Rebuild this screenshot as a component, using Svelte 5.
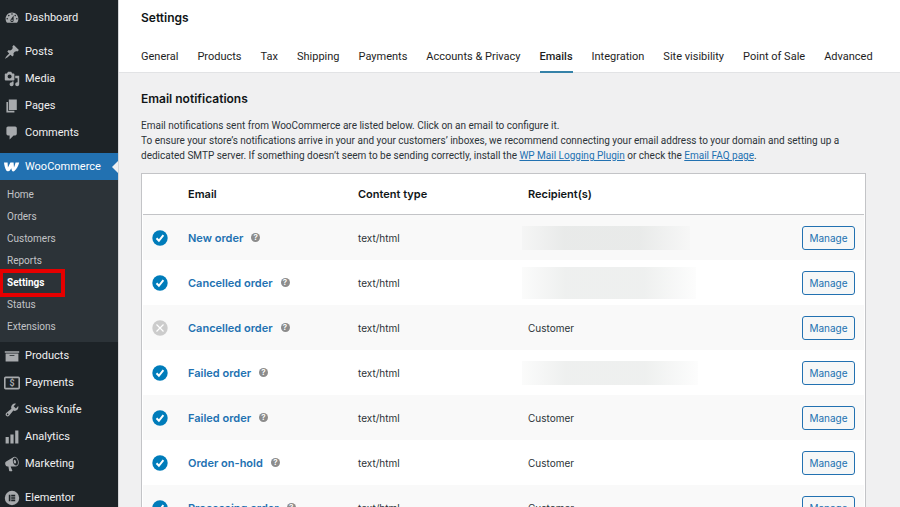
<script>
const menuTop = [
	{ label: 'Posts', icon: 'post' },
	{ label: 'Media', icon: 'media' },
	{ label: 'Pages', icon: 'page' },
	{ label: 'Comments', icon: 'comments' }
];

const submenu = ['Home', 'Orders', 'Customers', 'Reports', 'Settings', 'Status', 'Extensions'];

const menuBottom = [
	{ label: 'Products', icon: 'archive' },
	{ label: 'Payments', icon: 'payments' },
	{ label: 'Swiss Knife', icon: 'tools' },
	{ label: 'Analytics', icon: 'chart' },
	{ label: 'Marketing', icon: 'megaphone' }
];

const tabs = [
	'General', 'Products', 'Tax', 'Shipping', 'Payments', 'Accounts & Privacy',
	'Emails', 'Integration', 'Site visibility', 'Point of Sale', 'Advanced'
];

// hidden: size of the masked recipient address
const emails = [
	{ title: 'New order', enabled: true, hidden: { width: 168, height: 24 } },
	{ title: 'Cancelled order', enabled: true, hidden: { width: 174, height: 32 } },
	{ title: 'Cancelled order', enabled: false, recipient: 'Customer' },
	{ title: 'Failed order', enabled: true, hidden: { width: 176, height: 24 } },
	{ title: 'Failed order', enabled: true, recipient: 'Customer' },
	{ title: 'Order on-hold', enabled: true, recipient: 'Customer' },
	{ title: 'Processing order', enabled: true, recipient: 'Customer' }
];

const icons = {
	dashboard: 'M3.76 16h12.48c1.1-1.37 1.76-3.11 1.76-5 0-4.42-3.58-8-8-8s-8 3.58-8 8c0 1.89.66 3.63 1.76 5zM10 4c.55 0 1 .45 1 1s-.45 1-1 1-1-.45-1-1 .45-1 1-1zM6 6c.55 0 1 .45 1 1s-.45 1-1 1-1-.45-1-1 .45-1 1-1zm8 0c.55 0 1 .45 1 1s-.45 1-1 1-1-.45-1-1 .45-1 1-1zm-5.37 5.55L12 7v6c0 1.1-.9 2-2 2s-2-.9-2-2c0-.57.24-1.08.63-1.45zM4 10c.55 0 1 .45 1 1s-.45 1-1 1-1-.45-1-1 .45-1 1-1zm12 0c.55 0 1 .45 1 1s-.45 1-1 1-1-.45-1-1 .45-1 1-1zm-5 3c0-.55-.45-1-1-1s-1 .45-1 1 .45 1 1 1 1-.45 1-1z',
	post: 'M10.44 3.02l1.82-1.82 6.36 6.35-1.83 1.82c-1.05-.68-2.48-.57-3.41.36l-.75.75c-.92.93-1.04 2.35-.35 3.41l-1.83 1.82-2.41-2.41-2.8 2.79c-.42.42-3.38 2.71-3.8 2.29s1.86-3.39 2.28-3.81l2.79-2.79L4.1 9.36l1.83-1.82c1.05.69 2.48.57 3.4-.36l.75-.75c.93-.92 1.05-2.35.36-3.41z',
	media: 'M13 11V4c0-.55-.45-1-1-1h-1.67L9 1H5L3.67 3H2c-.55 0-1 .45-1 1v7c0 .55.45 1 1 1h10c.55 0 1-.45 1-1zM7 4.5c1.38 0 2.5 1.12 2.5 2.5S8.38 9.5 7 9.5 4.5 8.38 4.5 7 5.62 4.5 7 4.5zM14 6h5v10.5c0 1.38-1.12 2.5-2.5 2.5S14 17.88 14 16.5s1.12-2.5 2.5-2.5c.17 0 .34.02.5.05V9h-3V6zm-4 8.05V13h2v3.5c0 1.38-1.12 2.5-2.5 2.5S7 17.88 7 16.5 8.12 14 9.5 14c.17 0 .34.02.5.05z',
	page: 'M6 15V2h10v13H6zm-1 1h8v2H3V5h2v11z',
	comments: 'M5 2h9c1.1 0 2 .9 2 2v7c0 1.1-.9 2-2 2h-2l-5 5v-5H5c-1.1 0-2-.9-2-2V4c0-1.1.9-2 2-2z',
	archive: 'M19 4v2H1V4h18zM2 7h16v10H2V7zm11 3V9H7v1h6z',
	tools: 'M16.68 9.77c-1.34 1.34-3.3 1.67-4.95.99l-5.41 6.52c-.99.99-2.59.99-3.58 0s-.99-2.59 0-3.57l6.52-5.42c-.68-1.65-.35-3.61.99-4.95 1.28-1.28 3.12-1.62 4.72-1.06l-2.89 2.89 2.82 2.82 2.86-2.87c.53 1.58.18 3.39-1.08 4.65zM3.81 16.21c.4.39 1.04.39 1.43 0 .4-.4.4-1.04 0-1.43-.39-.4-1.03-.4-1.43 0-.39.39-.39 1.03 0 1.43z',
	chart: 'M18 18V2h-4v16h4zm-6 0V7H8v11h4zm-6 0v-8H2v8h4z',
	megaphone: 'M18.15 5.94c.46 1.62.38 3.22-.02 4.48-.42 1.28-1.26 2.18-2.3 2.48-.16.06-.26.06-.4.06-.06.02-.12.02-.18.02-.06.02-.14.02-.22.02h-6.8l2.22 5.5c.02.14-.06.26-.14.34-.08.1-.24.16-.34.16H6.95c-.1 0-.26-.06-.34-.16-.08-.08-.16-.2-.14-.34l-1-5.5H4.25l-.02-.02c-.5.06-1.08-.18-1.54-.62s-.88-1.08-1.06-1.88c-.24-.8-.2-1.56-.02-2.2.18-.62.58-1.08 1.06-1.3l.02-.02 9-5.4c.1-.06.18-.1.24-.16.06-.04.14-.08.24-.12.16-.08.28-.12.5-.18 1.04-.3 2.24.1 3.22.98s1.84 2.24 2.26 3.86zm-2.58 5.98h-.02c.4-.1.74-.34 1.04-.7.58-.7.86-1.76.86-3.04 0-.64-.1-1.3-.28-1.98-.34-1.36-1.02-2.5-1.78-3.24s-1.68-1.1-2.46-.88c-.82.22-1.4.96-1.7 2-.32 1.04-.28 2.36.06 3.72.38 1.36 1 2.5 1.8 3.24.78.74 1.62 1.1 2.48.88zm-2.54-7.08c.22-.04.42-.02.62.04.38.16.76.48 1.02 1s.42 1.2.42 1.78c0 .3-.04.56-.12.8-.18.48-.44.84-.86.94-.34.1-.8-.06-1.14-.4s-.64-.86-.78-1.5c-.18-.62-.12-1.24.02-1.72s.48-.84.82-.94z'
};

let activeTab = $state('Emails');
</script>

{#snippet menuItem(label, icon)}
	<li>
		<a class="item" href="#{icon}">
			<svg class="icon" viewBox="0 0 20 20" aria-hidden="true">
				{#if icon === 'payments'}
					<rect x="1" y="3" width="18" height="14" rx="1" fill="none" stroke="currentColor" stroke-width="2" />
					<text x="10" y="14" text-anchor="middle" font-size="11" font-weight="700">$</text>
				{:else if icon === 'elementor'}
					<path fill-rule="evenodd" d="M10 1a9 9 0 1 0 0 18a9 9 0 0 0 0-18zM6 6h2v8H6zM9 6h5v2H9zM9 9h5v2H9zM9 12h5v2H9z" />
				{:else}
					<path d={icons[icon]} />
				{/if}
			</svg>
			{label}
		</a>
	</li>
{/snippet}

<div class="page">
	<nav class="sidebar" aria-label="Main menu">
		<ul class="group">
			{@render menuItem('Dashboard', 'dashboard')}
		</ul>
		<ul class="group">
			{#each menuTop as item}
				{@render menuItem(item.label, item.icon)}
			{/each}
		</ul>
		<ul>
			<li>
				<a class="item current" href="#woocommerce">
					<svg class="icon" viewBox="0 0 20 20" aria-hidden="true">
						<path d="M0 4.500h4.500l.4 6L8 4.500h4l.5 6c.8-1.800 1.500-3.800 1.900-6H19c-1 4.500-3 8-6 10.500-.8.700-2.400.7-3-.3-.5-.9-.7-2-.8-3.200L7.300 14.500C6.500 15.800 3.500 15.800 2.700 14.200 1.200 11.500.3 8 0 4.500z" />
					</svg>
					WooCommerce
				</a>
				<ul class="submenu">
					{#each submenu as entry}
						<li><a href="#{entry.toLowerCase()}" class:selected={entry === 'Settings'}>{entry}</a></li>
					{/each}
				</ul>
			</li>
		</ul>
		<ul class="group">
			{#each menuBottom as item}
				{@render menuItem(item.label, item.icon)}
			{/each}
		</ul>
		<ul>
			{@render menuItem('Elementor', 'elementor')}
		</ul>
	</nav>

	<main>
		<header>
			<h1>Settings</h1>
			<nav class="tabs" aria-label="Settings sections">
				{#each tabs as tab}
					<a href="#tab" class:active={tab === activeTab} onclick={() => (activeTab = tab)}>{tab}</a>
				{/each}
			</nav>
		</header>

		<section>
			<h2>Email notifications</h2>
			<p>
				Email notifications sent from WooCommerce are listed below. Click on an email to configure it.<br />
				To ensure your store’s notifications arrive in your and your customers’ inboxes, we recommend connecting your email address to your domain and setting up a dedicated SMTP server. If something doesn’t seem to be sending correctly, install the <a href="#plugin">WP Mail Logging Plugin</a> or check the <a href="#faq">Email FAQ page</a>.
			</p>

			<table>
				<thead>
					<tr>
						<th class="status"></th>
						<th class="wide">Email</th>
						<th class="wide">Content type</th>
						<th>Recipient(s)</th>
						<th class="action"></th>
					</tr>
				</thead>
				<tbody>
					{#each emails as email}
						<tr>
							<td class="status">
								<svg class="badge" class:off={!email.enabled} viewBox="0 0 16 16" role="img" aria-label={email.enabled ? 'Enabled' : 'Disabled'}>
									<circle cx="8" cy="8" r="7.700" />
									{#if email.enabled}
										<path d="M4.500 8.300l2.400 2.500 4.500-5.600" stroke-width="2" />
									{:else}
										<path d="M4.500 4.500l7 7M11.500 4.500l-7 7" stroke-width="1.200" />
									{/if}
								</svg>
							</td>
							<td>
								<div class="name">
									<a href="#email">{email.title}</a>
									<span class="help" title="Help">?</span>
								</div>
							</td>
							<td>text/html</td>
							<td>
								{#if email.hidden}
									<div class="masked" style="width: {email.hidden.width}px; height: {email.hidden.height}px"></div>
								{:else}
									{email.recipient}
								{/if}
							</td>
							<td class="action"><button>Manage</button></td>
						</tr>
					{/each}
				</tbody>
			</table>
		</section>
	</main>
</div>

<style>
:global(body) {
	margin: 0;
	background: #f0f0f1;
}

.page {
	display: flex;
	height: 100vh;
	overflow: hidden;
	font-family: Roboto, "Liberation Sans", sans-serif;
	font-size: 10px;
	color: #2c3338;
}

ul {
	list-style: none;
	margin: 0;
	padding: 0;
}

.sidebar {
	flex: none;
	width: 118px;
	padding-top: 4px;
	background: #1d2327;
	border-right: 1px solid #d5d6d8;
}

.group {
	margin-bottom: 7px;
}

.item {
	position: relative;
	display: flex;
	align-items: center;
	gap: 5px;
	height: 27px;
	padding-left: 4px;
	font-size: 11px;
	color: #f0f0f1;
	text-decoration: none;
}

.icon {
	width: 16px;
	height: 16px;
	fill: currentColor;
	color: #a7aaad;
}

.current,
.current .icon {
	background: #2271b1;
	color: #fff;
}

.current::after {
	content: "";
	position: absolute;
	right: 0;
	border: 6px solid transparent;
	border-left: 0;
	border-right-color: #f0f0f1;
}

.submenu {
	padding: 4px 0;
	background: #2c3338;
}

.submenu a {
	position: relative;
	display: block;
	padding-left: 7px;
	line-height: 22px;
	color: #c3c4c7;
	text-decoration: none;
}

.submenu .selected {
	color: #fff;
	font-weight: 700;
}

/* highlight frame around the chosen entry */
.submenu .selected::after {
	content: "";
	position: absolute;
	inset: -3px auto -3px -1px;
	width: 58px;
	border: 4px solid #e60000;
}

main {
	flex: 1;
	min-width: 0;
}

header {
	padding: 10px 22px 0;
	background: #fff;
	border-bottom: 1px solid #e2e3e5;
}

h1,
h2 {
	margin: 0;
	font-family: Inter, "Liberation Sans", sans-serif;
	font-size: 12px;
	line-height: 16px;
	font-weight: 600;
	color: #101517;
}

.tabs {
	display: flex;
	gap: 19px;
	padding-top: 21px;
}

.tabs a {
	padding-bottom: 5px;
	margin-bottom: -1px;
	border-bottom: 2px solid transparent;
	font-size: 11px;
	line-height: 19px;
	color: #1e1e1e;
	text-decoration: none;
	white-space: nowrap;
}

.tabs .active {
	border-color: #3582a8;
	font-weight: 500;
}

section {
	padding: 18px 34px 0 22px;
}

p {
	margin: 11px 0 10px;
	line-height: 15px;
}

p a {
	color: #2271b1;
}

table {
	width: 100%;
	table-layout: fixed;
	padding: 0 1px;
	border: 1px solid #c3c4c7;
	border-spacing: 0;
	background: #fff;
	font-family: Inter, "Liberation Sans", sans-serif;
}

th {
	height: 40px;
	padding: 0;
	border-bottom: 1px solid #c3c4c7;
	font-size: 11px;
	font-weight: 600;
	text-align: left;
	color: #101517;
}

td {
	height: 45px;
	padding: 0;
}

tbody tr:nth-child(odd) {
	background: #f9f9f9;
}

.status {
	width: 36px;
	padding-left: 9px;
}

.wide {
	width: 170px;
}

.action {
	width: 64px;
	padding-right: 9px;
	text-align: right;
}

.badge {
	display: block;
	width: 16px;
	height: 16px;
	fill: #007cba;
}

.badge path {
	fill: none;
	stroke: #fff;
}

.badge.off {
	fill: #ccc;
}

.name {
	display: flex;
	align-items: center;
	gap: 8px;
	font-size: 11px;
	font-weight: 600;
}

.name a {
	color: #2271b1;
	text-decoration: none;
}

.help {
	width: 9px;
	height: 9px;
	border-radius: 50%;
	background: #8c8c8c;
	color: #fff;
	font-size: 8px;
	line-height: 9px;
	text-align: center;
}

.masked {
	margin-left: -6px;
	background: linear-gradient(90deg, rgba(40, 60, 50, 0.02), rgba(40, 60, 50, 0.08) 25%, rgba(40, 60, 50, 0.08) 70%, rgba(40, 60, 50, 0.01));
}

button {
	height: 24px;
	width: 53px;
	padding: 0;
	border: 1px solid #2271b1;
	border-radius: 3px;
	background: #f6f7f7;
	color: #2271b1;
	font: inherit;
}
</style>
